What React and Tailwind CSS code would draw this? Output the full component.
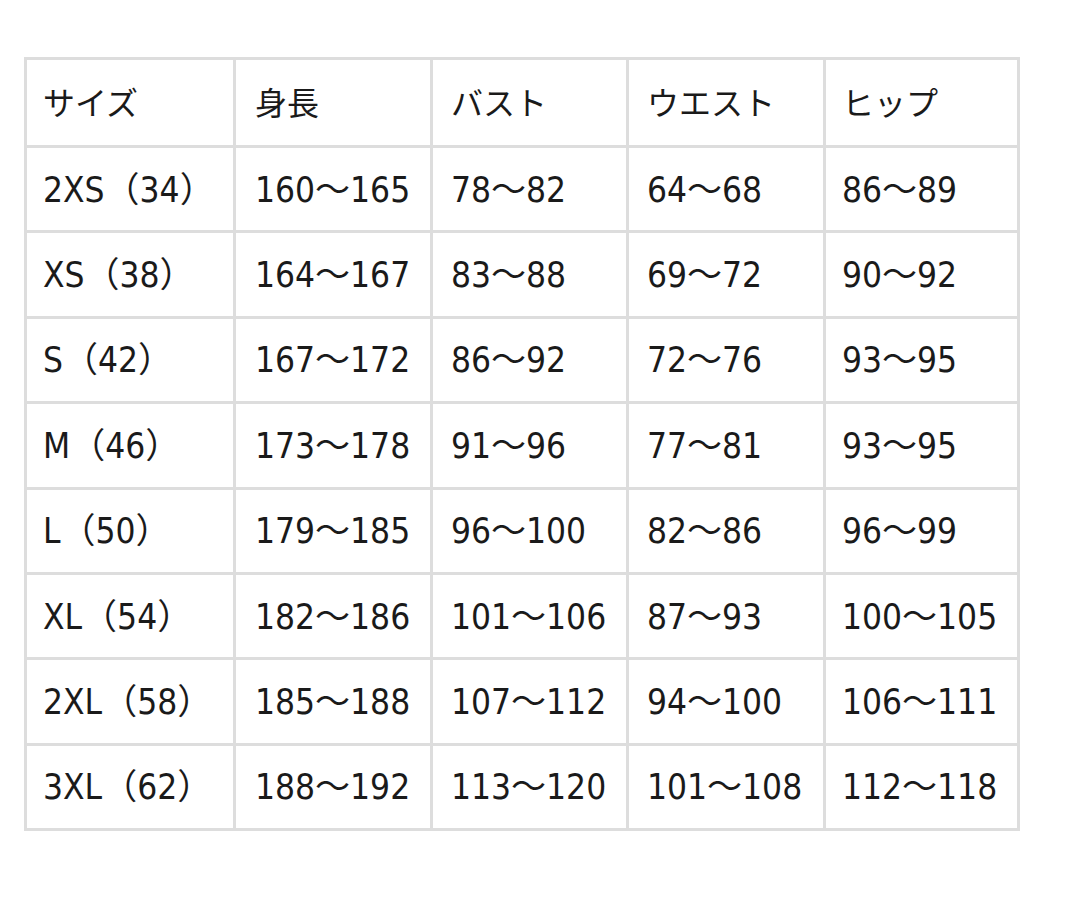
import React from "react";

const rows = [
  ["サイズ", "身長", "バスト", "ウエスト", "ヒップ"],
  ["2XS（34）", "160～165", "78～82", "64～68", "86～89"],
  ["XS（38）", "164～167", "83～88", "69～72", "90～92"],
  ["S（42）", "167～172", "86～92", "72～76", "93～95"],
  ["M（46）", "173～178", "91～96", "77～81", "93～95"],
  ["L（50）", "179～185", "96～100", "82～86", "96～99"],
  ["XL（54）", "182～186", "101～106", "87～93", "100～105"],
  ["2XL（58）", "185～188", "107～112", "94～100", "106～111"],
  ["3XL（62）", "188～192", "113～120", "101～108", "112～118"],
];

const pads = ["pl-4", "pl-[19px]", "pl-[18px]", "pl-[18px]", "pl-4"];

export default function App() {
  return (
    <div className="w-[1080px] h-[898px] bg-white pt-[57px] pl-[24px]">
      <div
        className="grid w-[996px] h-[774px] gap-[3px] p-[3px] bg-[#dddddd] grid-cols-[206px_194px_193px_194px_191px] grid-rows-[85px_repeat(8,1fr)] text-[#1a1a1a] leading-none"
        style={{ fontFamily: '"DejaVu Sans Condensed", "DejaVu Sans", "Noto Sans CJK JP", sans-serif' }}
      >
        {rows.map((r, i) =>
          r.map((c, j) => (
            <div
              key={i + "-" + j}
              className={
                "bg-white flex items-center pt-[2px] whitespace-nowrap " +
                (i === 0 ? "text-[32px] " : "text-[35px] ") +
                pads[j]
              }
            >
              {c}
            </div>
          ))
        )}
      </div>
    </div>
  );
}
